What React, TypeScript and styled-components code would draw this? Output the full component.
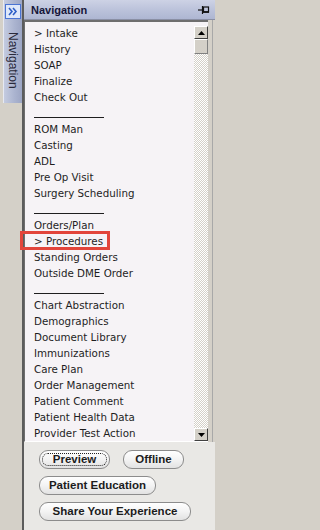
import React from "react";
import styled, { createGlobalStyle } from "styled-components";

const GlobalStyle = createGlobalStyle`
  html, body {
    margin: 0;
    padding: 0;
    background: #d4d0c8;
  }
  * {
    box-sizing: border-box;
  }
`;

type Item = { label: string; sep?: boolean; marked?: boolean };

const items: Item[] = [
  { label: "> Intake" },
  { label: "History" },
  { label: "SOAP" },
  { label: "Finalize" },
  { label: "Check Out" },
  { label: "", sep: true },
  { label: "ROM Man" },
  { label: "Casting" },
  { label: "ADL" },
  { label: "Pre Op Visit" },
  { label: "Surgery Scheduling" },
  { label: "", sep: true },
  { label: "Orders/Plan" },
  { label: "> Procedures", marked: true },
  { label: "Standing Orders" },
  { label: "Outside DME Order" },
  { label: "", sep: true },
  { label: "Chart Abstraction" },
  { label: "Demographics" },
  { label: "Document Library" },
  { label: "Immunizations" },
  { label: "Care Plan" },
  { label: "Order Management" },
  { label: "Patient Comment" },
  { label: "Patient Health Data" },
  { label: "Provider Test Action" },
];

const App: React.FC = () => {
  return (
    <>
      <GlobalStyle />
      <Frame>
        <SideStrip>
          <SideTab>
            <ExpandButton>
              <svg width="10" height="9" viewBox="0 0 10 9">
                <path d="M1 1 L4 4.5 L1 8 M5 1 L8 4.5 L5 8" fill="none" stroke="#2e5fc7" strokeWidth="1.6" />
              </svg>
            </ExpandButton>
            <SideLabel>Navigation</SideLabel>
          </SideTab>
        </SideStrip>

        <Panel>
          <Header>
            <HeaderTitle>Navigation</HeaderTitle>
            <PinIcon width="12" height="10" viewBox="0 0 12 10">
              <path d="M0 5 H4" stroke="#111" strokeWidth="1.2" />
              <path d="M4.5 1 V9" stroke="#111" strokeWidth="1.2" />
              <rect x="5.5" y="2" width="5" height="5" fill="none" stroke="#111" strokeWidth="1.2" />
              <path d="M5 7 H11" stroke="#111" strokeWidth="1.6" />
            </PinIcon>
          </Header>

          <Body>
            <ListBox>
              <ItemList>
                {items.map((it, i) =>
                  it.sep ? (
                    <Row key={i}>
                      <SepLine />
                    </Row>
                  ) : (
                    <Row key={i}>
                      {it.label}
                      {it.marked ? <Marker /> : null}
                    </Row>
                  )
                )}
              </ItemList>
              <ScrollBar>
                <ArrowButton>
                  <svg width="7" height="4" viewBox="0 0 7 4">
                    <path d="M0 4 L3.5 0 L7 4 Z" fill="#000" />
                  </svg>
                </ArrowButton>
                <Thumb />
                <Track />
                <ArrowButton>
                  <svg width="7" height="4" viewBox="0 0 7 4">
                    <path d="M0 0 L3.5 4 L7 0 Z" fill="#000" />
                  </svg>
                </ArrowButton>
              </ScrollBar>
            </ListBox>
            <RightEdge />
          </Body>

          <Footer>
            <ButtonRow>
              <PillButton w={71} focused>Preview</PillButton>
              <PillButton w={61}>Offline</PillButton>
            </ButtonRow>
            <ButtonRow>
              <PillButton w={117}>Patient Education</PillButton>
            </ButtonRow>
            <ButtonRow>
              <PillButton w={152}>Share Your Experience</PillButton>
            </ButtonRow>
          </Footer>
        </Panel>
      </Frame>
    </>
  );
};

export default App;

const Frame = styled.div`
  width: 215px;
  height: 530px;
  display: flex;
  background: #d4d0c8;
  font-family: "DejaVu Sans", "Liberation Sans", sans-serif;
  overflow: hidden;
`;

const SideStrip = styled.div`
  width: 22px;
  flex-shrink: 0;
  padding-left: 3px;
`;

const SideTab = styled.div`
  width: 19px;
  height: 103px;
  background: linear-gradient(90deg, #c4cbe0 0%, #aab3cf 60%, #9da6c4 100%);
  border-left: 1px solid #e6e9f2;
  display: flex;
  flex-direction: column;
  align-items: center;
  padding-top: 4px;
`;

const ExpandButton = styled.div`
  width: 16px;
  height: 15px;
  background: #dfe8fa;
  border: 1px solid #4a74d4;
  display: flex;
  align-items: center;
  justify-content: center;
`;

const SideLabel = styled.div`
  writing-mode: vertical-rl;
  margin-top: 13px;
  font-family: "Liberation Sans", sans-serif;
  font-size: 12px;
  color: #2a2a3a;
`;

const Panel = styled.div`
  flex: 1;
  min-width: 0;
  display: flex;
  flex-direction: column;
  border-left: 2px solid #5c5c5c;
`;

const Header = styled.div`
  height: 20px;
  flex-shrink: 0;
  display: flex;
  align-items: center;
  justify-content: space-between;
  padding: 0 5px 0 7px;
  background: linear-gradient(180deg, #cdd2e5 0%, #bcc3db 50%, #aeb6d2 100%);
  border-bottom: 1px solid #8a8fa4;
`;

const HeaderTitle = styled.span`
  font-family: "Liberation Sans", sans-serif;
  font-weight: bold;
  font-size: 11px;
  color: #16163a;
`;

const PinIcon = styled.svg`
  display: block;
`;

const Body = styled.div`
  height: 422px;
  flex-shrink: 0;
  display: flex;
`;

const ListBox = styled.div`
  flex: 1;
  min-width: 0;
  display: flex;
  background: #f6f3f6;
  border-top: 2px solid #6e6e6e;
  border-left: 1px solid #6e6e6e;
  border-bottom: 1px solid #ffffff;
  padding-top: 3px;
`;

const ItemList = styled.div`
  flex: 1;
  display: flex;
  flex-direction: column;
  padding-left: 9px;
`;

const Row = styled.div`
  position: relative;
  height: 16px;
  line-height: 16px;
  font-size: 10.3px;
  color: #1e1e1e;
  white-space: nowrap;
`;

const SepLine = styled.div`
  width: 70px;
  height: 13px;
  border-bottom: 1px solid #1e1e1e;
`;

const Marker = styled.span`
  position: absolute;
  left: -14px;
  top: -2px;
  width: 90px;
  height: 19px;
  border: 3px solid #e2453b;
`;

const ScrollBar = styled.div`
  width: 14px;
  flex-shrink: 0;
  display: flex;
  flex-direction: column;
  margin-top: 1px;
`;

const ArrowButton = styled.div`
  width: 14px;
  height: 13px;
  flex-shrink: 0;
  background: #d4d0c8;
  border-top: 1px solid #ffffff;
  border-left: 1px solid #ffffff;
  border-right: 1px solid #404040;
  border-bottom: 1px solid #404040;
  display: flex;
  align-items: center;
  justify-content: center;
`;

const Thumb = styled.div`
  height: 15px;
  flex-shrink: 0;
  background: #d4d0c8;
  border-top: 1px solid #ffffff;
  border-left: 1px solid #ffffff;
  border-right: 1px solid #808080;
  border-bottom: 1px solid #808080;
`;

const Track = styled.div`
  flex: 1;
  background-color: #ffffff;
  background-image: repeating-conic-gradient(#d4d0c8 0 25%, #ffffff 0 50%);
  background-size: 2px 2px;
`;

const RightEdge = styled.div`
  width: 5px;
  flex-shrink: 0;
  border-right: 1px solid #a8a8a8;
  margin-right: 2px;
`;

const Footer = styled.div`
  flex: 1;
  display: flex;
  flex-direction: column;
  gap: 7px;
  padding: 8px 0 0 15px;
  background: #e9e8e5;
`;

const ButtonRow = styled.div`
  display: flex;
  gap: 13px;
`;

const PillButton = styled.div<{ w: number; focused?: boolean }>`
  width: ${(p) => p.w}px;
  height: 19px;
  border: 1px solid #8c8c8c;
  border-radius: 9px;
  background: linear-gradient(180deg, #ffffff 0%, #f3f3f3 50%, #e2e2e2 100%);
  font-family: "Liberation Sans", sans-serif;
  font-size: 11.5px;
  font-weight: bold;
  color: #1c1c1c;
  line-height: 17px;
  text-align: center;
  white-space: nowrap;
  outline: ${(p) => (p.focused ? "1px dotted #222" : "none")};
  outline-offset: -4px;
`;
